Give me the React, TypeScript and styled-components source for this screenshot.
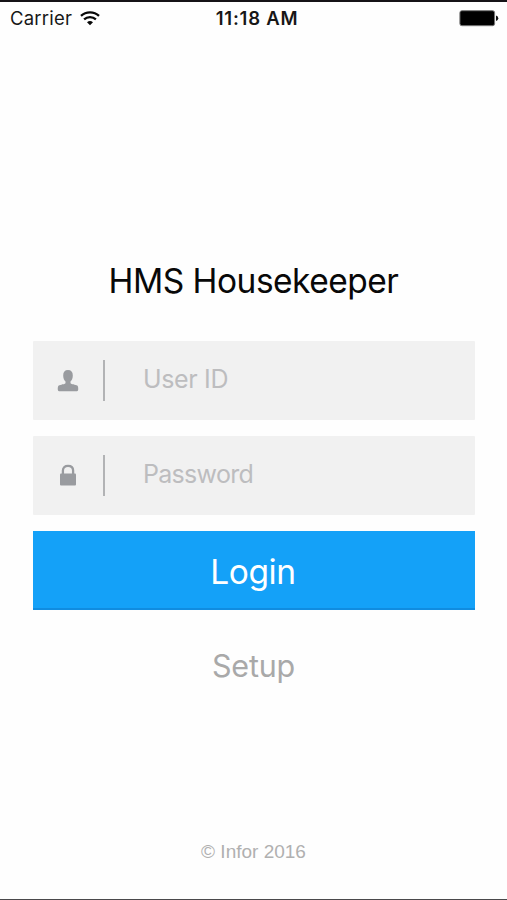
import React from "react";
import styled, { createGlobalStyle } from "styled-components";

const GlobalStyle = createGlobalStyle`
  * { box-sizing: border-box; }
  body { margin: 0; background: #fefefe; }
`;

const Screen = styled.main`
  display: flex;
  flex-direction: column;
  width: 507px;
  height: 900px;
  overflow: hidden;
  background: #fefefe;
  border-top: 2px solid #151317;
  border-bottom: 1px solid #4a494b;
  font-family: Inter, "Liberation Sans", sans-serif;
`;

const StatusBar = styled.header`
  display: grid;
  grid-template-columns: 1fr auto 1fr;
  align-items: center;
  height: 33px;
  padding: 0 8px 0 10px;
  color: #171717;
`;

const Network = styled.div`
  display: flex;
  align-items: center;
  gap: 8px;
`;

const Carrier = styled.span`
  font-size: 18.5px;
  line-height: 33px;
  letter-spacing: 0.2px;
`;

const Clock = styled.time`
  font-size: 18.5px;
  font-weight: 600;
  line-height: 33px;
  letter-spacing: 0.75px;
  margin-left: 5px;
`;

const Battery = styled.svg`
  justify-self: end;
`;

const Title = styled.h1`
  margin: 224px 0 0;
  height: 44px;
  color: #080808;
  font-size: 33.5px;
  font-weight: 400;
  line-height: 44px;
  letter-spacing: -0.5px;
  text-align: center;
`;

const Form = styled.form`
  display: flex;
  flex-direction: column;
  gap: 16px;
  margin: 38px 32px 0 33px;
`;

const Field = styled.label`
  display: flex;
  align-items: center;
  height: 79px;
  border-radius: 1px;
  background: #f1f1f1;
`;

const IconSlot = styled.span`
  display: flex;
  justify-content: center;
  width: 70px;
  color: #999b9f;
`;

const Divider = styled.span`
  width: 2px;
  height: 41px;
  background: #b2b3b5;
`;

const Input = styled.input<{ $tracking: number }>`
  flex: 1;
  min-width: 0;
  height: 40px;
  margin: 0 16px 3px 38px;
  padding: 0;
  border: 0;
  outline: 0;
  background: transparent;
  color: #555;
  font: 400 25px/40px Inter, "Liberation Sans", sans-serif;
  letter-spacing: ${({ $tracking }) => $tracking}px;
  &::placeholder { color: #bdbdbf; opacity: 1; }
`;

const LoginButton = styled.button`
  height: 79px;
  padding: 5px 2px 0 0;
  border: 0;
  border-bottom: 2px solid #108ce0;
  background: #14a1f8;
  color: #fff;
  font: 400 33.5px/72px Inter, "Liberation Sans", sans-serif;
  letter-spacing: -0.4px;
`;

const SetupButton = styled.button`
  align-self: center;
  height: 44px;
  margin-top: 34px;
  padding: 0;
  border: 0;
  background: transparent;
  color: #a9a9a9;
  font: 400 30.5px/44px Inter, "Liberation Sans", sans-serif;
  letter-spacing: -0.2px;
`;

const Footer = styled.footer`
  margin: auto 0 35px;
  color: #b0b0b0;
  font: 400 19px/24px "Liberation Sans", Arial, sans-serif;
  text-align: center;
`;

function WifiIcon() {
  return (
    <svg width="20" height="16" viewBox="0 0 20 16" fill="none" stroke="#080808" strokeWidth="2.3">
      <path d="M1 4.8C6 .1 14 .1 19 4.8M4.1 8.4C7.4 5.4 12.6 5.4 15.9 8.4" />
      <path d="M7 11.3Q10 8.8 13 11.3L10 14.3Z" fill="#080808" stroke="none" />
    </svg>
  );
}

function PersonIcon() {
  return (
    <svg width="22" height="22" viewBox="0 0 22 22" fill="currentColor">
      <path d="M11 0C7.8 0 6.2 2 6.2 5.4C6.2 8.2 7.2 10.2 8.5 11.6V13.2C7.8 14.2 3.5 14.4 1.7 15.6C.8 16.3.7 18.2.8 19.8Q.9 21.2 2 21.2H20Q21.1 21.2 21.2 19.8C21.3 18.2 21.2 16.3 20.3 15.6C18.5 14.4 14.2 14.2 13.5 13.2V11.6C14.8 10.2 15.8 8.2 15.8 5.4C15.8 2 14.2 0 11 0Z" />
    </svg>
  );
}

function LockIcon() {
  return (
    <svg width="16" height="24" viewBox="0 0 16 24" fill="currentColor">
      <path d="M2.9 11V6.6C2.9 3.4 5 1.9 8 1.9S13.1 3.4 13.1 6.6V11" fill="none" stroke="currentColor" strokeWidth="2.3" />
      <rect y="9.6" width="16" height="11.8" rx="1" />
    </svg>
  );
}

export default function App() {
  return (
    <>
      <GlobalStyle />
      <Screen>
        <StatusBar>
          <Network>
            <Carrier>Carrier</Carrier>
            <WifiIcon />
          </Network>
          <Clock>11:18 AM</Clock>
          <Battery width="40" height="17" viewBox="0 0 40 17">
            <rect x=".9" y=".7" width="34.7" height="15" rx="2" fill="#000" stroke="#777" />
            <path d="M37 5.5Q39.3 6 39.3 8.3T37 11Z" fill="#111" />
          </Battery>
        </StatusBar>
        <Title>HMS Housekeeper</Title>
        <Form onSubmit={(event) => event.preventDefault()}>
          <Field>
            <IconSlot><PersonIcon /></IconSlot>
            <Divider />
            <Input $tracking={-0.35} placeholder="User ID" aria-label="User ID" />
          </Field>
          <Field>
            <IconSlot><LockIcon /></IconSlot>
            <Divider />
            <Input $tracking={-0.7} type="password" placeholder="Password" aria-label="Password" />
          </Field>
          <LoginButton type="submit">Login</LoginButton>
        </Form>
        <SetupButton type="button">Setup</SetupButton>
        <Footer>© Infor 2016</Footer>
      </Screen>
    </>
  );
}
